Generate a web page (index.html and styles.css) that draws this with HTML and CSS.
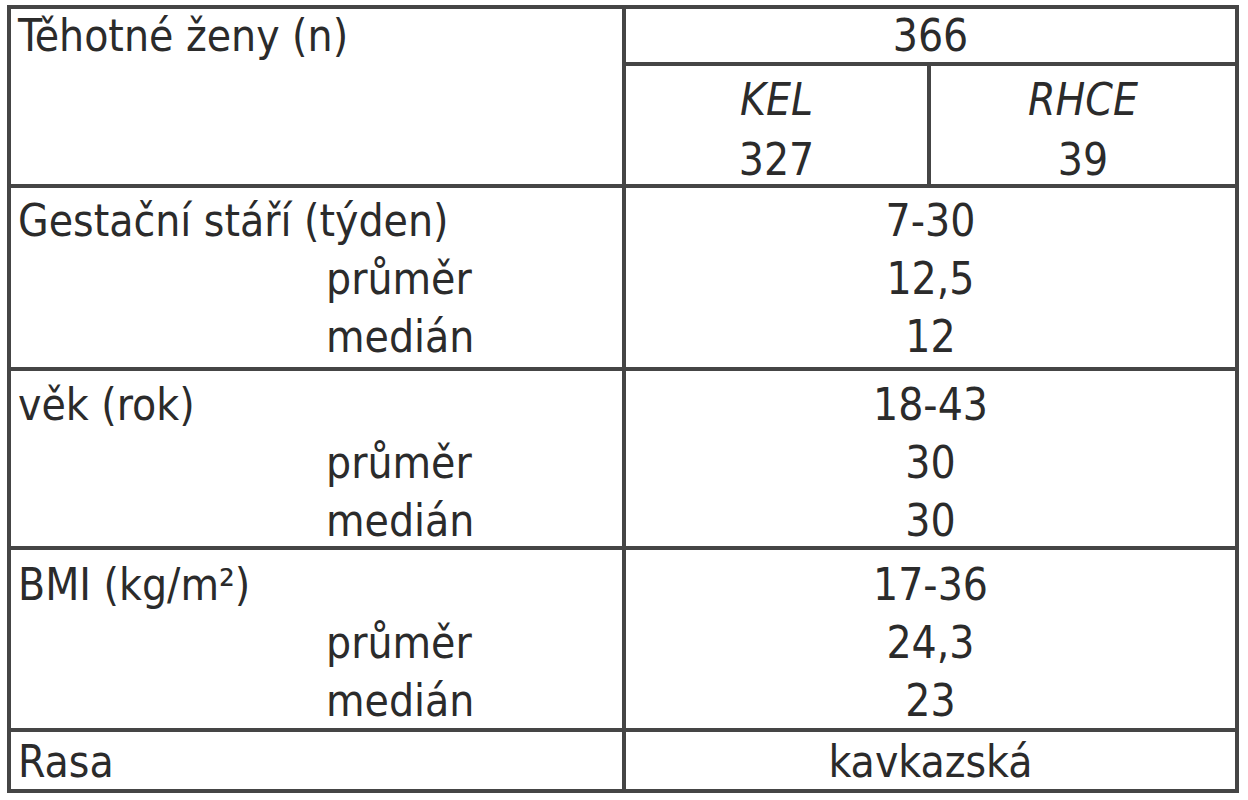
FILE: index.html
```html
<!DOCTYPE html>
<html lang="cs">
<head>
<meta charset="utf-8">
<title>Těhotné ženy</title>
<link rel="stylesheet" href="styles.css">
</head>
<body>
<div class="table">
  <div class="cell label head"><div class="line">Těhotné ženy (n)</div></div>
  <div class="cell value total"><div class="line">366</div></div>
  <div class="cell value sub"><div class="line"><i>KEL</i></div><div class="line">327</div></div>
  <div class="cell value sub"><div class="line"><i>RHCE</i></div><div class="line">39</div></div>

  <div class="cell label r3"><div class="line">Gestační stáří (týden)</div><div class="line ind">průměr</div><div class="line ind">medián</div></div>
  <div class="cell value wide r3"><div class="line">7-30</div><div class="line">12,5</div><div class="line">12</div></div>

  <div class="cell label r4"><div class="line">věk (rok)</div><div class="line ind">průměr</div><div class="line ind">medián</div></div>
  <div class="cell value wide r4"><div class="line">18-43</div><div class="line">30</div><div class="line">30</div></div>

  <div class="cell label r5"><div class="line">BMI (kg/m²)</div><div class="line ind">průměr</div><div class="line ind">medián</div></div>
  <div class="cell value wide r5"><div class="line">17-36</div><div class="line">24,3</div><div class="line">23</div></div>

  <div class="cell label r6"><div class="line">Rasa</div></div>
  <div class="cell value wide r6"><div class="line">kavkazská</div></div>
</div>
</body>
</html>
```

FILE: styles.css
```css
html, body {
  margin: 0;
  padding: 0;
  background: #ffffff;
}

.table {
  display: grid;
  grid-template-columns: 611px 301px 304px;
  grid-template-rows: 53px 118px 179px 175px 178px 57px;
  gap: 4px;
  padding: 4px;
  margin: 5px 0 0 7px;
  width: fit-content;
  background: #454545;
  font-family: "DejaVu Sans Condensed", "DejaVu Sans", sans-serif;
  font-stretch: condensed;
  font-size: 44px;
  color: #2b2b2b;
}

.cell {
  background: #ffffff;
  overflow: hidden;
}

.line {
  line-height: 58px;
  height: 58px;
  white-space: nowrap;
}

.label {
  padding-left: 7px;
}

.label .ind {
  padding-left: 308px;
}

.value {
  text-align: center;
}

.head {
  grid-row: span 2;
}

.total {
  grid-column: span 2;
}

.wide {
  grid-column: span 2;
}

.total .line {
  line-height: 53px;
  height: 53px;
}

.sub {
  padding-top: 5px;
}

.sub .line + .line {
  margin-top: 2px;
}

.head {
  padding-top: 0;
}

.head .line {
  line-height: 53px;
  height: 53px;
}

.r3 {
  padding-top: 4px;
}

.r4 {
  padding-top: 5px;
}

.r5 {
  padding-top: 6px;
}

.r6 {
  padding-top: 2px;
}

.r6 .line {
  line-height: 55px;
  height: 55px;
}
```
